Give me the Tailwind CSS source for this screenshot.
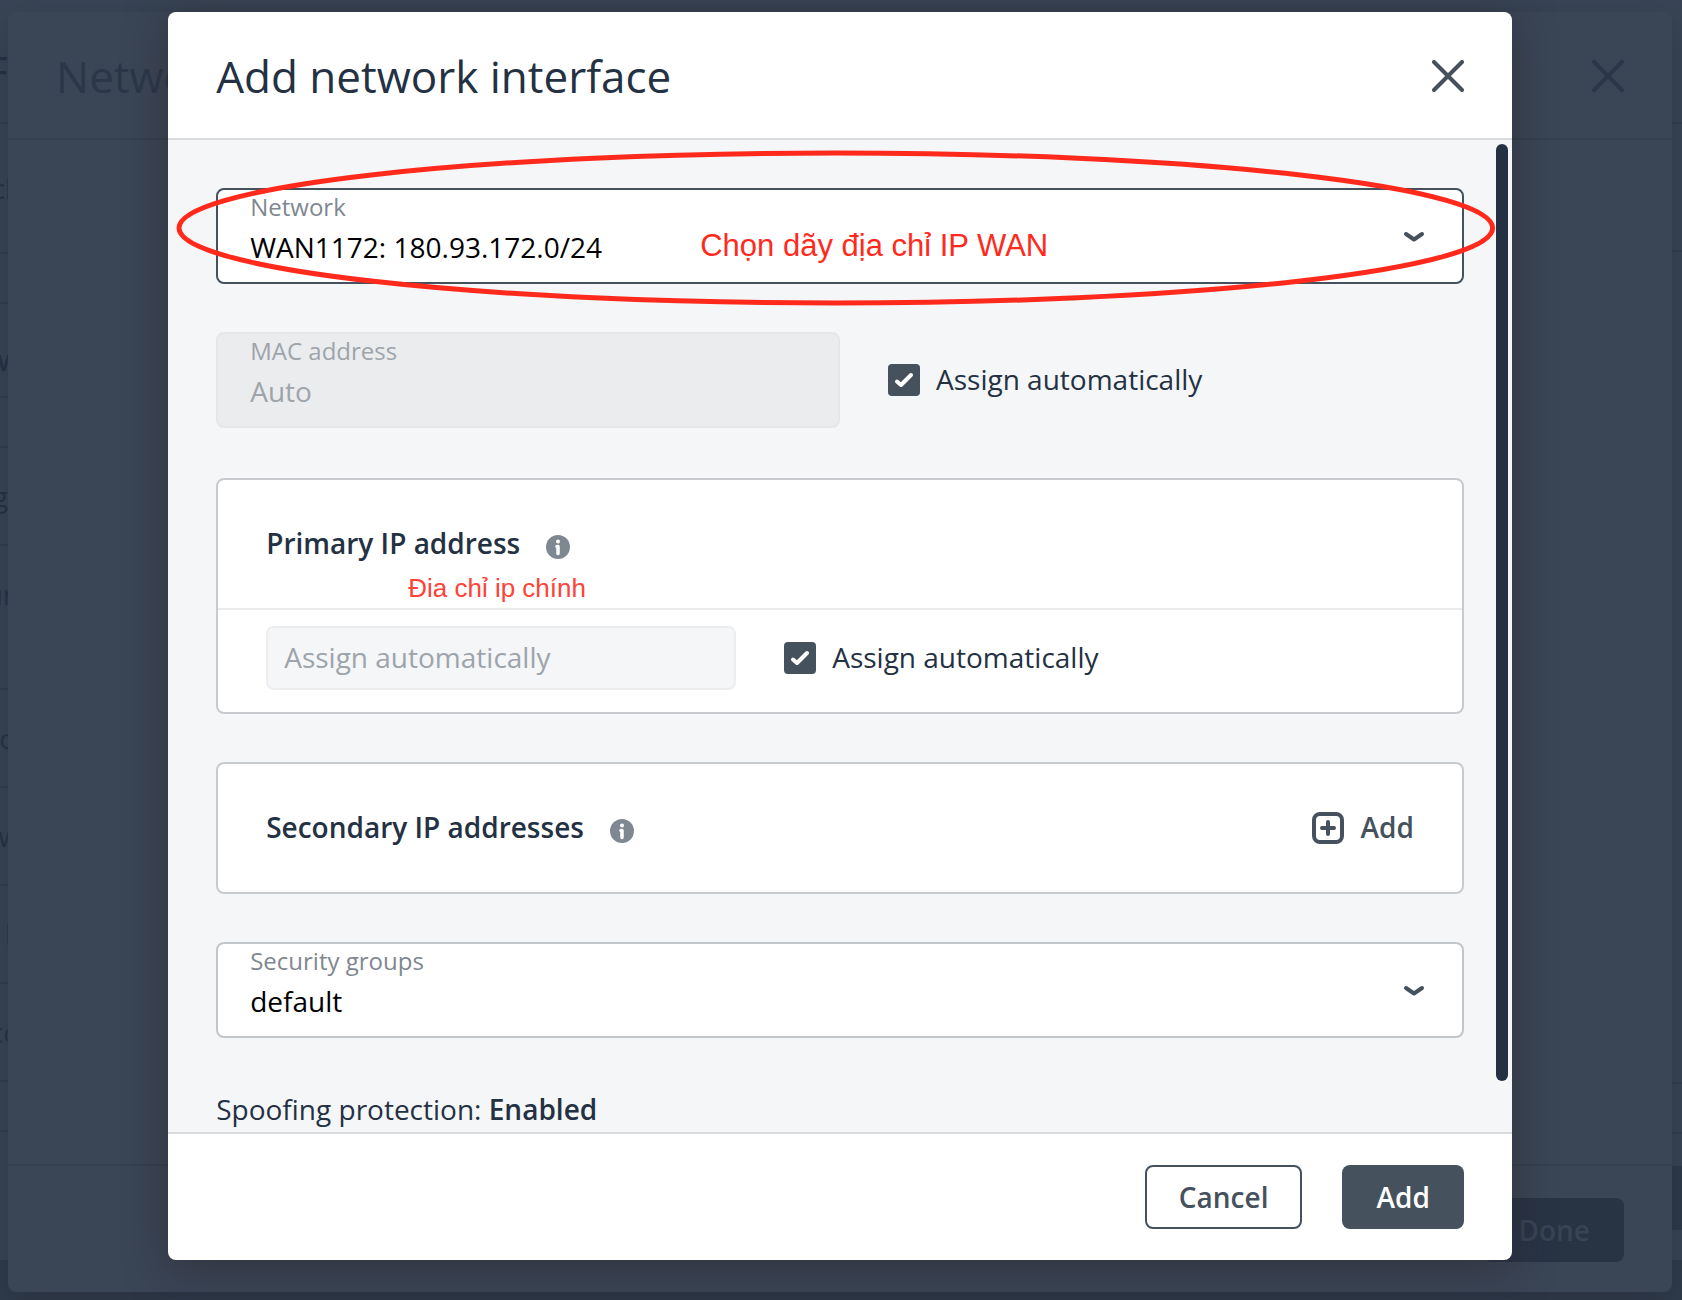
<!DOCTYPE html>
<html lang="en">
  <head>
    <meta charset="utf-8" />
    <meta name="viewport" content="width=device-width, initial-scale=1" />
    <title>Add network interface</title>
    <script src="https://cdn.jsdelivr.net/npm/@tailwindcss/browser@4"></script>
  </head>
  <body class="relative h-screen overflow-hidden bg-[#303b4b] font-['Open_Sans',sans-serif] text-[28px] leading-10 text-[#243143]">

    <!-- page behind both dialogs -->
    <div class="absolute inset-x-0 top-0 bottom-10 flex justify-between bg-[#394555] text-[#243143]" aria-hidden="true">
      <div class="flex w-2 flex-col items-end overflow-hidden">
        <div class="flex h-[122px] w-full shrink-0 items-center justify-end pt-5 text-[44px]">F</div>
        <div class="flex h-[130px] w-full shrink-0 items-center justify-end border-t-2 border-[#323d4c]"><span class="-mr-1">cl</span></div>
        <div class="h-[50px] w-full shrink-0 border-t-2 border-[#323d4c]"></div>
        <div class="flex h-[94px] w-full shrink-0 items-center justify-end border-t-2 border-[#323d4c] pt-5 font-semibold"><span class="-mr-3">w</span></div>
        <div class="h-[50px] w-full shrink-0 border-t-2 border-[#323d4c]"></div>
        <div class="flex h-[98px] w-full shrink-0 items-center justify-end border-t-2 border-[#323d4c]"><span>g</span></div>
        <div class="flex h-[98px] w-full shrink-0 items-center justify-end border-t-2 border-[#323d4c]"><span class="-mr-3">un</span></div>
        <div class="h-[46px] w-full shrink-0"></div>
        <div class="flex h-[98px] w-full shrink-0 items-center justify-end border-t-2 border-[#323d4c]"><span class="-mr-2">o</span></div>
        <div class="flex h-[98px] w-full shrink-0 items-center justify-end border-t-2 border-[#323d4c]"><span class="-mr-3">w</span></div>
        <div class="flex h-[98px] w-full shrink-0 items-center justify-end border-t-2 border-[#323d4c]"><span class="-mr-1">l</span></div>
        <div class="flex h-[98px] w-full shrink-0 items-center justify-end border-t-2 border-[#323d4c]"><span class="-mr-3">co</span></div>
        <div class="h-[52px] w-full shrink-0 border-y-2 border-[#323d4c]"></div>
      </div>
      <div class="flex w-[10px] flex-col">
        <div class="h-[122px] shrink-0"></div>
        <div class="h-[130px] shrink-0 border-y-2 border-[#323d4c]"></div>
        <div class="flex-1"></div>
        <div class="h-[52px] shrink-0 border-y-2 border-[#323d4c]"></div>
        <div class="h-8 shrink-0"></div>
        <div class="h-16 shrink-0 bg-[#2d3848]"></div>
        <div class="h-[30px] shrink-0"></div>
      </div>
    </div>

    <!-- dialog underneath -->
    <div class="absolute inset-x-2 top-3 bottom-2 mr-[2px] flex flex-col rounded-lg bg-[#3a4555] text-[#2b3748] shadow-[0_12px_32px_rgba(36,44,56,0.5)]" aria-hidden="true">
      <div class="flex h-32 shrink-0 items-center justify-between border-b-2 border-[#343f4f] px-12 pt-[2px]">
        <div class="text-[44px]">Network</div>
        <svg class="size-8" viewBox="0 0 32 32" fill="none" stroke="currentColor" stroke-width="4" stroke-linecap="round"><path d="M2 2l28 28M30 2L2 30" /></svg>
      </div>
      <div class="flex-1"></div>
      <div class="flex h-32 shrink-0 items-center justify-end border-t-2 border-[#343f4f] px-12 pt-[2px]">
        <div class="flex h-16 items-center rounded-lg bg-[#283344] px-[34px] font-semibold text-[#384453]">Done</div>
      </div>
    </div>

    <div class="absolute inset-x-[10%] top-3 bottom-10 mr-[2px] flex flex-col overflow-hidden rounded-lg bg-white shadow-[0_8px_40px_rgba(43,37,44,0.55)]" role="dialog" aria-labelledby="dialog-title">
      <header class="flex h-32 shrink-0 items-center justify-between border-b-2 border-[#d8dadd] px-12 pt-[2px]">
        <h1 id="dialog-title" class="text-[44px]">Add network interface</h1>
        <button type="button" aria-label="Close" class="text-[#45515d]">
          <svg class="size-8" viewBox="0 0 32 32" fill="none" stroke="currentColor" stroke-width="4" stroke-linecap="round"><path d="M2 2l28 28M30 2L2 30" /></svg>
        </button>
      </header>

      <main class="relative flex min-h-0 flex-1 flex-col gap-12 overflow-hidden bg-[#f4f6f8] px-12 pt-12">
        <div class="relative shrink-0">
          <label for="network" class="absolute top-[3px] left-[34px] text-2xl leading-8 text-[#7f8790]">Network</label>
          <select id="network" class="block h-24 w-full appearance-none rounded-lg border-2 border-[#45515d] bg-white px-8 pt-9 pb-[14px] text-black">
            <option>WAN1172: 180.93.172.0/24</option>
          </select>
          <svg class="pointer-events-none absolute top-11 right-10 h-[10px] w-5 overflow-visible text-[#45515d]" viewBox="0 0 20 10" fill="none" stroke="currentColor" stroke-width="4" stroke-linecap="round" stroke-linejoin="round"><path d="M2 2l8 5.500 8-5.500" /></svg>
          <!-- hand-made annotation -->
          <div class="pointer-events-none absolute -top-[35px] -right-[29px] -bottom-[19px] -left-[37px]">
            <svg class="size-full overflow-visible"><ellipse cx="50%" cy="50%" rx="50%" ry="50%" fill="none" stroke="#ff2a1c" stroke-width="5" /></svg>
          </div>
          <p class="pointer-events-none absolute top-[38px] left-[484px] font-['Liberation_Sans',sans-serif] text-[31px] text-[#ff2a1c]">Chọn dãy địa chỉ IP WAN</p>
        </div>

        <div class="flex shrink-0 items-center gap-12">
          <div class="relative w-1/2">
            <label for="mac" class="absolute top-[3px] left-[34px] text-2xl leading-8 text-[#9ea4aa]">MAC address</label>
            <input id="mac" type="text" value="Auto" disabled class="block h-24 w-full rounded-lg border-2 border-[#e4e6e8] bg-[#ebecee] px-8 pt-9 pb-[14px] text-[#9ea4aa]" />
          </div>
          <label class="flex items-center gap-4">
            <span class="relative size-8">
              <input type="checkbox" checked class="block size-8 appearance-none rounded-sm bg-[#45515d]" />
              <svg class="pointer-events-none absolute inset-0 size-8 text-white" viewBox="0 0 32 32" fill="none" stroke="currentColor" stroke-width="4" stroke-linecap="round" stroke-linejoin="round"><path d="M9 17.500l4 3.500L23 11" /></svg>
            </span>
            <span class="pb-[2px]">Assign automatically</span>
          </label>
        </div>

        <section class="relative mt-[2px] shrink-0 rounded-lg border-2 border-[#c7cace] bg-white">
          <div class="flex h-[130px] items-center border-b-2 border-[#e9ebed] px-12">
            <h2 class="pb-[2px] font-semibold">Primary IP address</h2>
            <svg class="mt-[6px] ml-[26px] size-6" viewBox="0 0 24 24"><circle cx="12" cy="12" r="12" fill="#7f8790" /><circle cx="12" cy="6.500" r="2" fill="#fff" /><path d="M11 11.500h1v7" fill="none" stroke="#fff" stroke-width="3.500" stroke-linecap="round" stroke-linejoin="round" /></svg>
          </div>
          <p class="pointer-events-none absolute top-[88px] left-[190px] font-['Liberation_Sans',sans-serif] text-[26px] text-[#ff4238]">Đia chỉ ip chính</p>
          <div class="flex items-center gap-12 px-12 pt-4 pb-[22px]">
            <input type="text" aria-label="Primary IP address" placeholder="Assign automatically" disabled class="block h-16 w-[470px] rounded-lg border-2 border-[#ebedef] bg-[#f4f6f8] px-4 pb-[2px] placeholder:text-[#9ea4aa]" />
            <label class="flex items-center gap-4">
              <span class="relative size-8">
                <input type="checkbox" checked class="block size-8 appearance-none rounded-sm bg-[#45515d]" />
                <svg class="pointer-events-none absolute inset-0 size-8 text-white" viewBox="0 0 32 32" fill="none" stroke="currentColor" stroke-width="4" stroke-linecap="round" stroke-linejoin="round"><path d="M9 17.500l4 3.500L23 11" /></svg>
              </span>
              <span class="pb-[2px]">Assign automatically</span>
            </label>
          </div>
        </section>

        <section class="flex h-[132px] shrink-0 items-center rounded-lg border-2 border-[#c7cace] bg-white px-12">
          <h2 class="pb-[2px] font-semibold">Secondary IP addresses</h2>
          <svg class="mt-[6px] ml-[26px] size-6" viewBox="0 0 24 24"><circle cx="12" cy="12" r="12" fill="#7f8790" /><circle cx="12" cy="6.500" r="2" fill="#fff" /><path d="M11 11.500h1v7" fill="none" stroke="#fff" stroke-width="3.500" stroke-linecap="round" stroke-linejoin="round" /></svg>
          <button type="button" class="ml-auto flex items-center gap-4 font-semibold text-[#45515d]">
            <svg class="size-8" viewBox="0 0 32 32" fill="none" stroke="currentColor" stroke-width="4" stroke-linecap="round"><rect x="2" y="2" width="28" height="28" rx="6" /><path d="M16 10v12M10 16h12" /></svg>
            <span class="pb-[2px]">Add</span>
          </button>
        </section>

        <div class="relative shrink-0">
          <label for="groups" class="absolute top-[3px] left-[34px] text-2xl leading-8 text-[#7f8790]">Security groups</label>
          <select id="groups" class="block h-24 w-full appearance-none rounded-lg border-2 border-[#c1c6ca] bg-white px-8 pt-9 pb-[14px] text-black">
            <option>default</option>
          </select>
          <svg class="pointer-events-none absolute top-11 right-10 h-[10px] w-5 overflow-visible text-[#45515d]" viewBox="0 0 20 10" fill="none" stroke="currentColor" stroke-width="4" stroke-linecap="round" stroke-linejoin="round"><path d="M2 2l8 5.500 8-5.500" /></svg>
        </div>

        <p class="mt-[3px] shrink-0">Spoofing protection: <strong class="font-semibold">Enabled</strong></p>

        <!-- scrollbar thumb -->
        <div class="absolute top-1 right-1 bottom-[51px] w-3 rounded-full bg-[#243143]"></div>
      </main>

      <footer class="flex h-32 shrink-0 items-center justify-end gap-10 border-t-2 border-[#d8dadd] px-12">
        <button type="button" class="h-16 rounded-lg border-2 border-[#45515d] bg-white px-8 font-semibold text-[#45515d]">Cancel</button>
        <button type="button" class="h-16 rounded-lg bg-[#45515d] px-[34px] font-semibold text-white">Add</button>
      </footer>
    </div>
  </body>
</html>
